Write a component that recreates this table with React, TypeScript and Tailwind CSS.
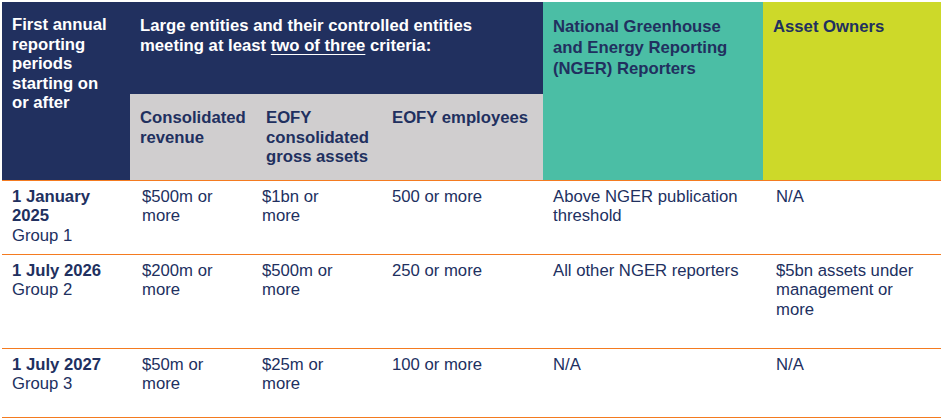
const cols = 'grid grid-cols-[128px_126px_126px_161px_220px_178px]';

type Row = {
  date: string;
  group: string;
  revenue: string;
  assets: string;
  employees: string;
  nger: string;
  owners: string;
  height: string;
};

const rows: Row[] = [
  {
    date: '1 January 2025',
    group: 'Group 1',
    revenue: '$500m or more',
    assets: '$1bn or more',
    employees: '500 or more',
    nger: 'Above NGER publication threshold',
    owners: 'N/A',
    height: 'h-[74px]',
  },
  {
    date: '1 July 2026',
    group: 'Group 2',
    revenue: '$200m or more',
    assets: '$500m or more',
    employees: '250 or more',
    nger: 'All other NGER reporters',
    owners: '$5bn assets under management or more',
    height: 'h-[94px]',
  },
  {
    date: '1 July 2027',
    group: 'Group 3',
    revenue: '$50m or more',
    assets: '$25m or more',
    employees: '100 or more',
    nger: 'N/A',
    owners: 'N/A',
    height: 'h-[69px]',
  },
];

export default function App() {
  return (
    <div className="bg-white w-[941px] h-[420px] pl-[2px] pt-[2px] font-['Liberation_Sans',Arial,sans-serif] text-[16.7px] leading-[19.4px] text-[#21305f]">
      {/* header */}
      <div className={`${cols} grid-rows-[92px_86px] border-b border-[#f47b20] font-bold leading-[19.6px]`}>
        <div className="row-span-2 bg-[#21305f] text-white pl-[10px] pr-[16px] pt-[13px]">
          First annual reporting periods starting on or after
        </div>
        <div className="col-span-3 bg-[#21305f] text-white pl-[10px] pr-[6px] pt-[14px]">
          Large entities and their controlled entities meeting at least{' '}
          <span className="underline underline-offset-[3px]">two of three</span> criteria:
        </div>
        <div className="row-span-2 bg-[#4bbea5] px-[10px] pt-[14px] leading-[21px]">
          National Greenhouse and Energy Reporting (NGER) Reporters
        </div>
        <div className="row-span-2 bg-[#cdd929] px-[10px] pt-[14px] leading-[21px]">Asset Owners</div>
        <div className="bg-[#d0cecf] pl-[10px] pr-[4px] pt-[14px] leading-[20px]">Consolidated revenue</div>
        <div className="bg-[#d0cecf] pl-[10px] pr-[4px] pt-[14px]">EOFY consolidated gross assets</div>
        <div className="bg-[#d0cecf] pl-[10px] pr-[4px] pt-[14px]">EOFY employees</div>
      </div>

      {/* body */}
      {rows.map((r) => (
        <div key={r.date} className={`${cols} ${r.height} border-b border-[#f47b20]`}>
          <div className="pl-[10px] pr-[16px] pt-[6px]">
            <div className="font-bold">{r.date}</div>
            <div>{r.group}</div>
          </div>
          <div className="pl-[12px] pr-[22px] pt-[6px]">{r.revenue}</div>
          <div className="pl-[6px] pr-[32px] pt-[6px]">{r.assets}</div>
          <div className="pl-[10px] pr-[6px] pt-[6px]">{r.employees}</div>
          <div className="pl-[10px] pr-[12px] pt-[6px]">{r.nger}</div>
          <div className="pl-[13px] pr-[10px] pt-[6px]">{r.owners}</div>
        </div>
      ))}
    </div>
  );
}
